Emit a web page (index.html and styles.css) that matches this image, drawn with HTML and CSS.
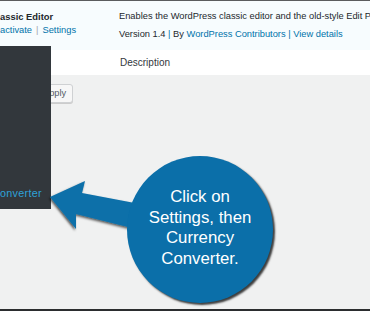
FILE: index.html
```html
<!DOCTYPE html>
<html lang="en">
<head>
<meta charset="utf-8">
<title>Plugins</title>
<link rel="stylesheet" href="styles.css">
</head>
<body>
<div class="screen">
  <div class="row plugin-row">
    <div class="col-name">
      <div class="plugin-title">assic Editor</div>
      <div class="row-actions"><a class="link">activate</a><span class="sep">|</span><a class="link">Settings</a></div>
    </div>
    <div class="col-desc">
      <div class="desc-text">Enables the WordPress classic editor and the old-style Edit Post screen.</div>
      <div class="meta">Version 1.4 <span class="sep2">|</span> By <a class="link">WordPress Contributors</a> <span class="sep2">|</span> <a class="link">View details</a></div>
    </div>
  </div>
  <div class="row foot-row">
    <div class="col-name"></div>
    <div class="col-desc head">Description</div>
  </div>
  <div class="tablenav">
    <button class="button">Apply</button>
  </div>

  <div class="menu">
    <span class="menu-item">onverter</span>
  </div>

  <svg class="arrow" width="100" height="60" viewBox="45 175 100 60">
    <defs>
      <filter id="sh" x="-20%" y="-20%" width="140%" height="160%">
        <feDropShadow dx="-1" dy="1.5" stdDeviation="0.8" flood-color="#000" flood-opacity="0.65"/>
      </filter>
    </defs>
    <polygon points="50,197 85,181 82,193 140,204 136,229 76,214 76,229" fill="#0b6fa9" filter="url(#sh)"/>
  </svg>

  <div class="callout">
    <p>Click on<br>Settings, then<br>Currency<br>Converter.</p>
  </div>
</div>
</body>
</html>
```

FILE: styles.css
```css
* { box-sizing: border-box; }

body {
  margin: 0;
  background: #f1f1f1;
  font-family: "Liberation Sans", Arial, sans-serif;
}

.screen {
  position: relative;
  width: 370px;
  height: 311px;
  overflow: hidden;
  background: #f0f1f1;
  border-top: 1px solid #5a5c5e;
  border-bottom: 2px solid #2b2d2f;
  color: #23282d;
}

.row {
  display: flex;
}

.col-name {
  width: 119px;
  flex: none;
}

.col-desc {
  flex: 1;
  min-width: 0;
  white-space: nowrap;
}

.plugin-row {
  height: 49px;
  background: #f7fcfe;
  padding-top: 9px;
  font-size: 9.3px;
  line-height: 13px;
}

.plugin-title {
  font-weight: bold;
  font-size: 9.4px;
  color: #23282d;
}

.row-actions {
  margin-top: 1px;
}

.link {
  color: #0073aa;
  text-decoration: none;
}

.sep {
  color: #a0a5aa;
  margin: 0 4px;
}

.sep2 {
  color: #0073aa;
}

.meta {
  margin-top: 5px;
}

.foot-row {
  height: 25px;
  background: #ffffff;
  padding-top: 6px;
  font-size: 10px;
  line-height: 13px;
}

.head {
  color: #32373c;
  padding-left: 1px;
}

.tablenav {
  padding: 9px 0 0 35px;
}

.button {
  display: block;
  height: 19px;
  width: 38px;
  padding: 0 0 0 7px;
  text-align: left;
  font-family: "Liberation Sans", Arial, sans-serif;
  font-size: 9.3px;
  line-height: 17px;
  color: #555d66;
  background: #f7f7f7;
  border: 1px solid #cfd1d3;
  border-radius: 3px;
  box-shadow: 0 1px 0 #ccc;
}

.menu {
  position: absolute;
  left: 0;
  top: 45px;
  width: 51px;
  height: 163px;
  background: #32373c;
  padding-top: 140px;
}

.menu-item {
  display: block;
  font-size: 10.8px;
  line-height: 14px;
  letter-spacing: 0.3px;
  color: #2ea2d8;
  white-space: nowrap;
}

.arrow {
  position: absolute;
  left: 45px;
  top: 174px;
}

.callout {
  position: absolute;
  left: 127px;
  top: 155px;
  width: 146px;
  height: 147px;
  border-radius: 50%;
  background: #0b6fa9;
  box-shadow: 2px 2px 2px rgba(0, 0, 0, 0.75);
  display: flex;
  align-items: center;
  justify-content: center;
}

.callout p {
  margin: 0 0 3px;
  color: #ffffff;
  font-size: 16.8px;
  line-height: 20.5px;
  text-align: center;
}
```
